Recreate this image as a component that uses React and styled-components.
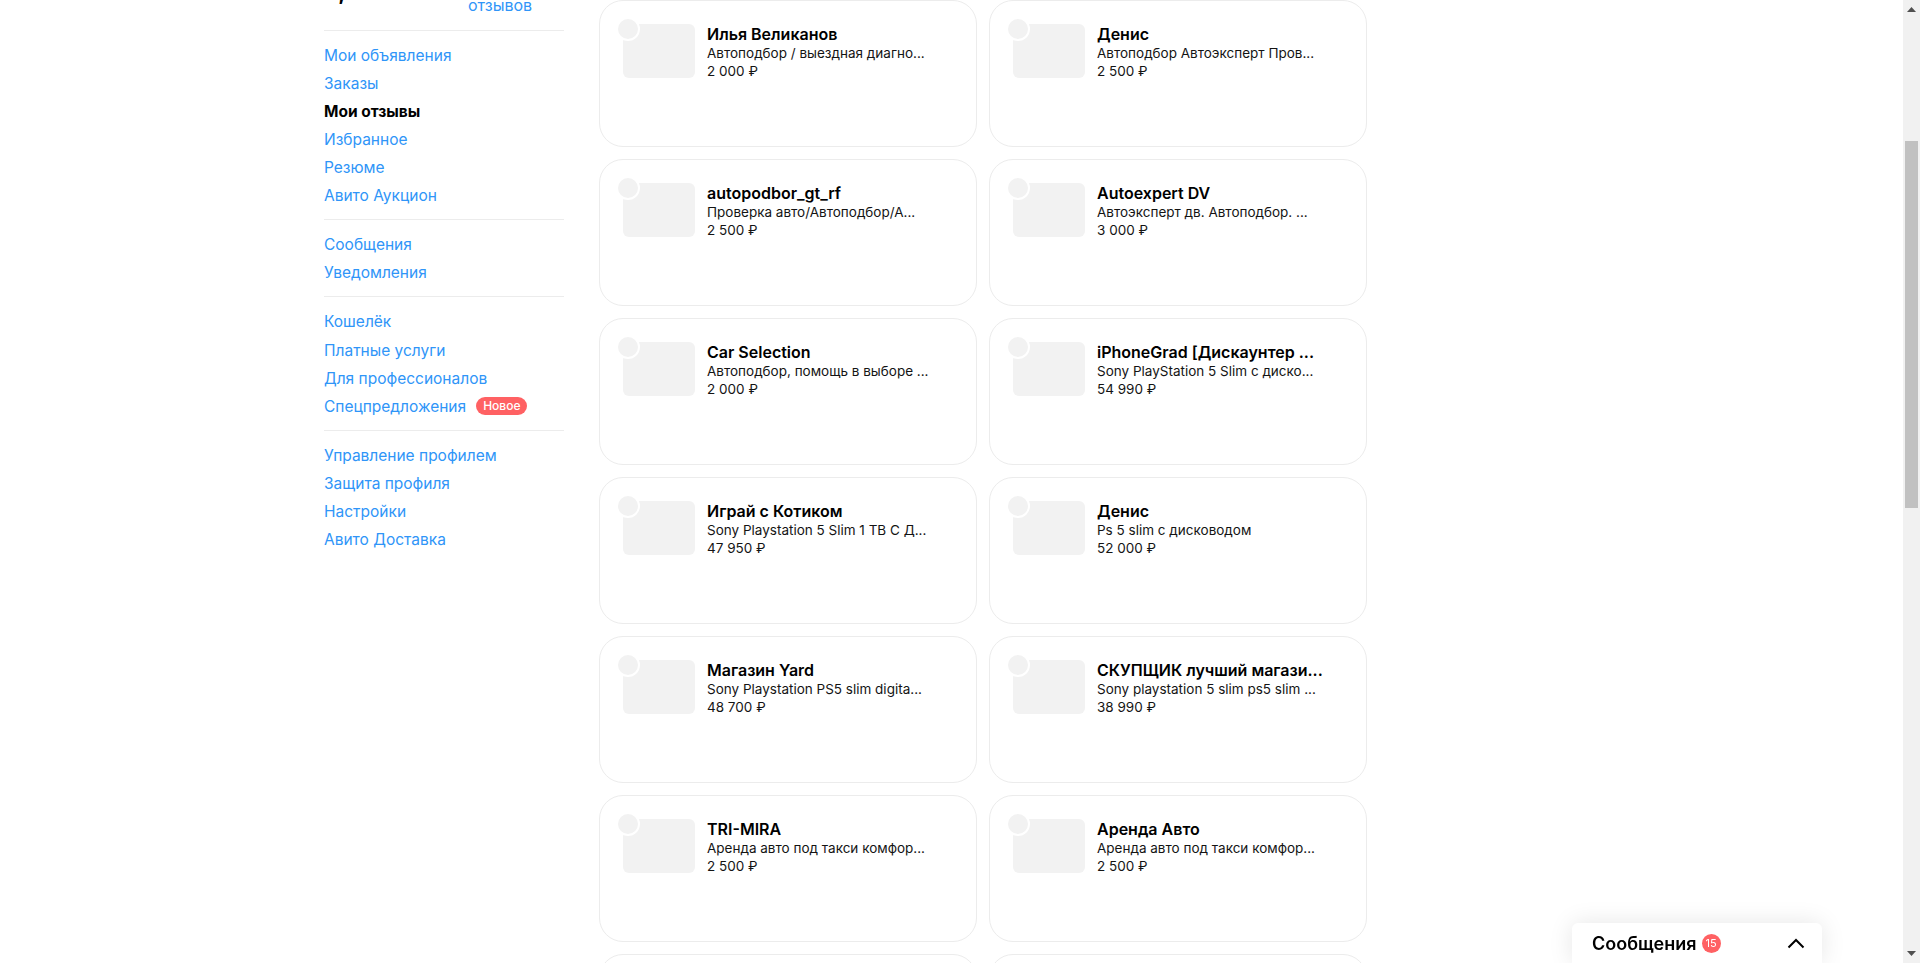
import React from "react";
import styled, { createGlobalStyle } from "styled-components";

const Global = createGlobalStyle`
  html, body { margin: 0; padding: 0; background: #fff; overflow: hidden; }
  body { font-family: Inter, "Noto Sans", "Liberation Sans", sans-serif; color: #000; }
`;

const Page = styled.div`
  height: 100vh;
  overflow: hidden;
  display: flex;
  align-items: flex-start;
  gap: 35px;
  padding-left: 324px;
`;

const Sidebar = styled.aside`
  width: 240px;
  flex: none;
`;

const SideHead = styled.div`
  height: 30px;
  display: flex;
  justify-content: space-between;
  align-items: flex-end;
  padding-bottom: 11px;
  box-sizing: border-box;
`;

const Rating = styled.span`
  font-size: 22px;
  font-weight: 700;
  line-height: 28px;
  margin-bottom: 13px;
`;

const ReviewsLink = styled.a`
  width: 96px;
  font-size: 16px;
  line-height: 28px;
  color: #2f95f8;
`;

const MenuGroup = styled.nav`
  display: flex;
  flex-direction: column;
  padding: 10px 0;
  border-top: 1px solid #ececec;
`;

const MenuItem = styled.a`
  display: flex;
  align-items: center;
  gap: 10px;
  height: ${(p) => (p.$tall ? 29 : 28)}px;
  font-size: 15.5px;
  font-weight: ${(p) => (p.$active ? 700 : 400)};
  color: ${(p) => (p.$active ? "#000" : "#2f95f8")};
  white-space: nowrap;
`;

const NewBadge = styled.span`
  height: 18px;
  padding: 0 7px;
  border-radius: 9px;
  background: #ff6163;
  color: #fff;
  font-size: 12px;
  line-height: 18px;
  font-weight: 500;
`;

const Grid = styled.main`
  display: grid;
  grid-template-columns: repeat(2, 378px);
  grid-auto-rows: 147px;
  gap: 12px;
`;

const Card = styled.article`
  display: flex;
  align-items: flex-start;
  gap: 12px;
  padding: 23px;
  border: 1px solid #ececec;
  border-radius: 24px;
  box-sizing: border-box;
`;

const Thumb = styled.div`
  position: relative;
  width: 72px;
  height: 54px;
  flex: none;
  background: #f2f2f2;
  border-radius: 6px;
`;

const Avatar = styled.span`
  position: absolute;
  top: -5px;
  left: -5px;
  width: 20px;
  height: 20px;
  border-radius: 50%;
  background: #f2f2f2;
  box-shadow: 0 0 0 2px #fff;
`;

const CardText = styled.div`
  display: flex;
  flex-direction: column;
  white-space: nowrap;
`;

const Name = styled.div`
  height: 20px;
  font-size: 16px;
  font-weight: 600;
  line-height: 20px;
  color: #000;
`;

const Line = styled.div`
  font-size: 13.5px;
  line-height: 18px;
  color: #141414;
`;

const ChatBar = styled.div`
  position: fixed;
  left: 1572px;
  bottom: 0;
  width: 250px;
  height: 40px;
  display: flex;
  align-items: center;
  gap: 5px;
  padding: 0 17px 0 20px;
  box-sizing: border-box;
  background: #fff;
  border-radius: 6px 6px 0 0;
  box-shadow: 0 0 24px rgba(0, 0, 0, 0.1);
`;

const ChatTitle = styled.span`
  font-size: 18px;
  font-weight: 600;
`;

const ChatCount = styled.span`
  width: 19px;
  height: 19px;
  border-radius: 50%;
  background: #ff6163;
  color: #fff;
  font-size: 11px;
  line-height: 19px;
  text-align: center;
`;

const Chevron = styled.svg`
  margin-left: auto;
  display: block;
`;

const Scrollbar = styled.div`
  position: fixed;
  top: 0;
  right: 0;
  bottom: 0;
  width: 17px;
  background: #f1f1f1;
  display: flex;
  justify-content: center;
`;

const Thumbbar = styled.div`
  width: 13px;
  height: 367px;
  margin-top: 141px;
  background: #c1c1c1;
`;

const Arrow = styled.svg`
  position: absolute;
  left: 4px;
  ${(p) => (p.$down ? "bottom: 7px;" : "top: 7px;")}
  display: block;
`;

const groups = [
  [
    { label: "Мои объявления" },
    { label: "Заказы" },
    { label: "Мои отзывы", active: true },
    { label: "Избранное" },
    { label: "Резюме" },
    { label: "Авито Аукцион" },
  ],
  [{ label: "Сообщения" }, { label: "Уведомления" }],
  [
    { label: "Кошелёк", tall: true },
    { label: "Платные услуги" },
    { label: "Для профессионалов" },
    { label: "Спецпредложения", badge: "Новое" },
  ],
  [
    { label: "Управление профилем" },
    { label: "Защита профиля" },
    { label: "Настройки" },
    { label: "Авито Доставка" },
  ],
];

const cards = [
  ["Илья Великанов", "Автоподбор / выездная диагно...", "2 000 ₽"],
  ["Денис", "Автоподбор Автоэксперт Пров...", "2 500 ₽"],
  ["autopodbor_gt_rf", "Проверка авто/Автоподбор/А...", "2 500 ₽"],
  ["Autoexpert DV", "Автоэксперт дв. Автоподбор. ...", "3 000 ₽"],
  ["Car Selection", "Автоподбор, помощь в выборе ...", "2 000 ₽"],
  ["iPhoneGrad [Дискаунтер ...", "Sony PlayStation 5 Slim с диско...", "54 990 ₽"],
  ["Играй с Котиком", "Sony Playstation 5 Slim 1 TB С Д...", "47 950 ₽"],
  ["Денис", "Ps 5 slim с дисководом", "52 000 ₽"],
  ["Магазин Yard", "Sony Playstation PS5 slim digita...", "48 700 ₽"],
  ["СКУПЩИК лучший магази...", "Sony playstation 5 slim ps5 slim ...", "38 990 ₽"],
  ["TRI-MIRA", "Аренда авто под такси комфор...", "2 500 ₽"],
  ["Аренда Авто", "Аренда авто под такси комфор...", "2 500 ₽"],
  ["", "", ""],
  ["", "", ""],
];

export default function App() {
  return (
    <>
      <Global />
      <Page>
        <Sidebar>
          <SideHead>
            <Rating>4,9</Rating>
            <ReviewsLink>отзывов</ReviewsLink>
          </SideHead>
          {groups.map((items, i) => (
            <MenuGroup key={i}>
              {items.map((item) => (
                <MenuItem key={item.label} $active={item.active} $tall={item.tall}>
                  {item.label}
                  {item.badge && <NewBadge>{item.badge}</NewBadge>}
                </MenuItem>
              ))}
            </MenuGroup>
          ))}
        </Sidebar>
        <Grid>
          {cards.map(([name, title, price], i) => (
            <Card key={i}>
              <Thumb>
                <Avatar />
              </Thumb>
              <CardText>
                <Name>{name}</Name>
                <Line>{title}</Line>
                <Line>{price}</Line>
              </CardText>
            </Card>
          ))}
        </Grid>
      </Page>
      <ChatBar>
        <ChatTitle>Сообщения</ChatTitle>
        <ChatCount>15</ChatCount>
        <Chevron width="18" height="11" viewBox="0 0 18 11" fill="none">
          <path d="M1.5 9.5 9 2l7.5 7.5" stroke="#000" strokeWidth="2" />
        </Chevron>
      </ChatBar>
      <Scrollbar>
        <Arrow width="9" height="5" viewBox="0 0 9 5">
          <path d="M4.5 0 9 5H0z" fill="#505050" />
        </Arrow>
        <Thumbbar />
        <Arrow $down width="9" height="5" viewBox="0 0 9 5">
          <path d="M0 0h9L4.5 5z" fill="#505050" />
        </Arrow>
      </Scrollbar>
    </>
  );
}
